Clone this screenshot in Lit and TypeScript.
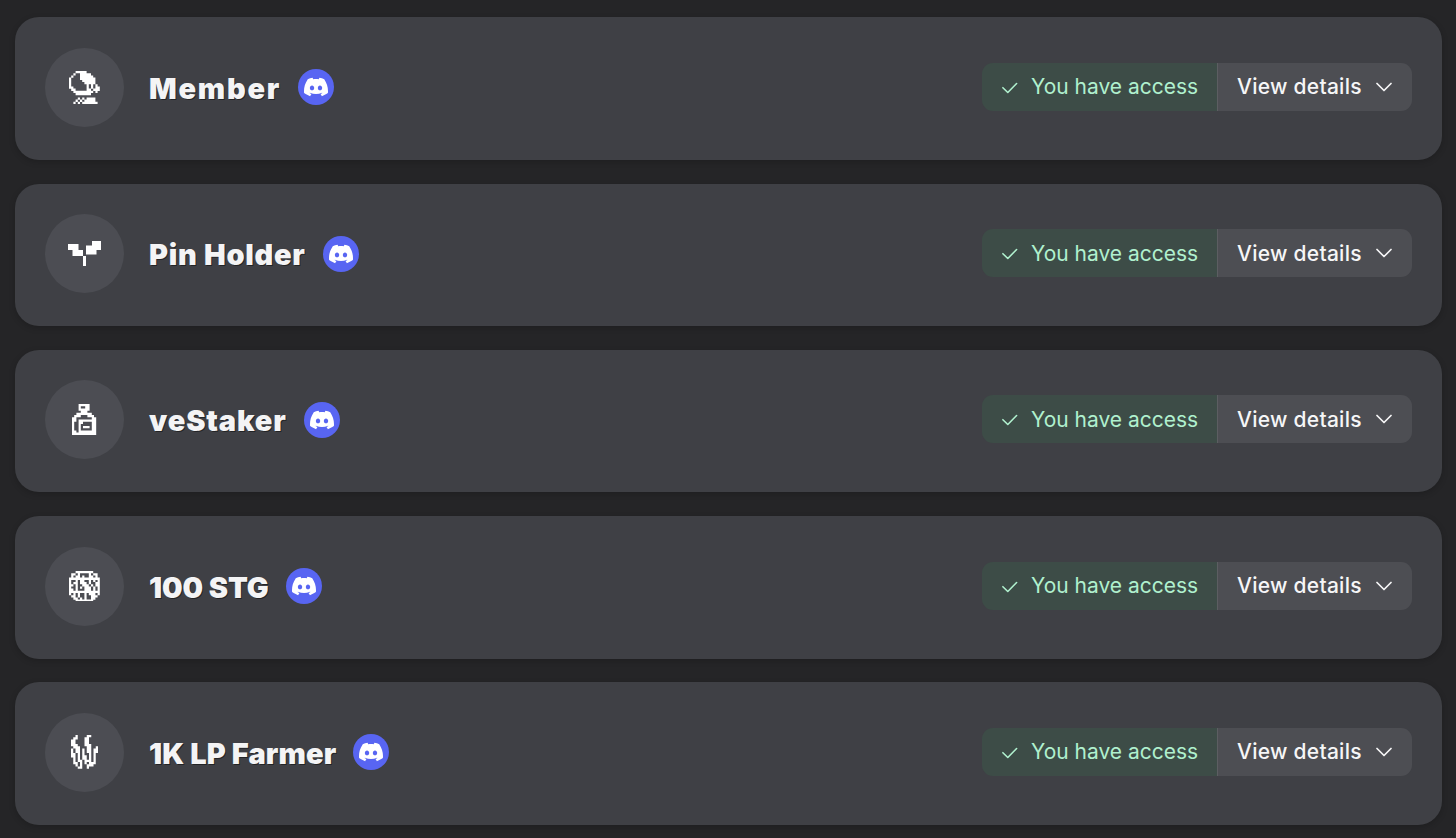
import { LitElement, html, css } from "lit";
import { customElement } from "lit/decorators.js";

const DISCORD = "M20.317 4.3698a19.7913 19.7913 0 00-4.8851-1.5152.0741.0741 0 00-.0785.0371c-.211.3753-.4447.8648-.6083 1.2495-1.8447-.2762-3.68-.2762-5.4868 0-.1636-.3933-.4058-.8742-.6177-1.2495a.077.077 0 00-.0785-.037 19.7363 19.7363 0 00-4.8852 1.515.0699.0699 0 00-.0321.0277C.5334 9.0458-.319 13.5799.0992 18.0578a.0824.0824 0 00.0312.0561c2.0528 1.5076 4.0413 2.4228 5.9929 3.0294a.0777.0777 0 00.0842-.0276c.4616-.6304.8731-1.2952 1.226-1.9942a.076.076 0 00-.0416-.1057c-.6528-.2476-1.2743-.5495-1.8722-.8923a.077.077 0 01-.0076-.1277c.1258-.0943.2517-.1923.3718-.2914a.0743.0743 0 01.0776-.0105c3.9278 1.7933 8.18 1.7933 12.0614 0a.0739.0739 0 01.0785.0095c.1202.099.246.1981.3728.2924a.077.077 0 01-.0066.1276 12.2986 12.2986 0 01-1.873.8914.0766.0766 0 00-.0407.1067c.3604.698.7719 1.3628 1.225 1.9932a.076.076 0 00.0842.0286c1.961-.6067 3.9495-1.5219 6.0023-3.0294a.077.077 0 00.0313-.0552c.5004-5.177-.8382-9.6739-3.5485-13.6604a.061.061 0 00-.0312-.0286zM8.02 15.3312c-1.1825 0-2.1569-1.0857-2.1569-2.419 0-1.3332.9555-2.4189 2.157-2.4189 1.2108 0 2.1757 1.0952 2.1568 2.419 0 1.3332-.9555 2.4189-2.1569 2.4189zm7.9748 0c-1.1825 0-2.1569-1.0857-2.1569-2.419 0-1.3332.9554-2.4189 2.1569-2.4189 1.2108 0 2.1757 1.0952 2.1568 2.419 0 1.3332-.946 2.4189-2.1568 2.4189Z";

const TREE = `
...#####......
..#..#####....
.#...######...
#....#######..
#.....######..
#......#####..
#.......#.#.#.
##......#.#.##
.##.....##.###
..#########.#.
...#######....
..............
....#.#.####..
...#.#.#####..
..#.#.#######.`;

const SPROUT = `
................######
................######
#######.........######
#######.....##########
#######.....##########
#######.....##########
...#######..#######...
...#######..#######...
...#######..#######...
...#######............
..........##..........
..........##..........
..........##..........
..........##..........
..........##..........
..........##..........
..........##..........`;

const BOTTLE = `
...#####...
...#..##...
...#####...
....###....
..#######..
.###...###.
##.......##
##.########
#..##....##
#..#.....##
#..#.###.##
#..#.....##
##.########
###########`;

const GLOBE = `
...########...
.##.#....#.##.
.#.##.#..##.#.
##############
#..#.##..#.#.#
#.##.###.#..##
##.#..###.#.##
#..#.#.###.#.#
##.#...###.#.#
##############
#.#.#..#.###.#
.##.#..#..###.
..##.#.#..##..
...########...`;

const FLAME = `
..#....##...
.##...##....
##....##....
##....##....
###...###...
.###...##..#
#.##.#.##.##
#.##.#.##.##
##.#.#..#.#.
##.#.##.#.#.
.#.#.##.#.#.
.#.##.###.#.
.##.#.#.###.
..#.#..###..
...##..#....`;

function pixelIcon(map: string, cell: number) {
  const rows = map.trim().split("\n");
  const w = Math.max(...rows.map((r) => r.length));
  const h = rows.length;
  let d = "";
  rows.forEach((row, y) => {
    for (const m of row.matchAll(/#+/g)) {
      d += `M${m.index} ${y}h${m[0].length}v1.04h-${m[0].length}z`;
    }
  });
  return html`<svg width=${w * cell} height=${h * cell} viewBox="0 0 ${w} ${h}" fill="#fff"><path d=${d}></path></svg>`;
}

const ROLES = [
  { name: "Member", icon: TREE, cell: 2.2, track: "1.75px" },
  { name: "Pin Holder", icon: SPROUT, cell: 1.5, track: "0.7px" },
  { name: "veStaker", icon: BOTTLE, cell: 2.2, track: "0.85px" },
  { name: "100 STG", icon: GLOBE, cell: 2.2, track: "-0.1px" },
  { name: "1K LP Farmer", icon: FLAME, cell: 2.25, track: "0.1px" },
];

@customElement("app-root")
export class AppRoot extends LitElement {
  static styles = css`
    :host {
      display: block;
      box-sizing: border-box;
      width: 1456px;
      height: 838px;
      padding: 17.25px 14px 0 15px;
      background: #252527;
      overflow: hidden;
      font-family: Inter, "Liberation Sans", sans-serif;
    }
    .list {
      display: flex;
      flex-direction: column;
      gap: 23.75px;
    }
    .card {
      box-sizing: border-box;
      height: 142.5px;
      padding: 30.5px 30px 0;
      display: flex;
      align-items: flex-start;
      justify-content: space-between;
      background: #3f4045;
      border-radius: 24px;
      box-shadow: 0 2px 6px rgba(0, 0, 0, 0.18);
    }
    .left {
      display: flex;
      align-items: center;
      height: 79px;
    }
    .avatar {
      width: 79px;
      height: 79px;
      border-radius: 50%;
      background: #4c4d53;
      display: flex;
      align-items: center;
      justify-content: center;
      margin-right: 25px;
    }
    .title {
      font-size: 29px;
      font-weight: 900;
      line-height: 36px;
      padding-top: 3px;
      color: #f4f4f5;
      text-shadow: 1px 1px 0 rgba(0, 0, 0, 0.45);
      margin-right: 17px;
      white-space: nowrap;
    }
    .discord {
      width: 36px;
      height: 36px;
      border-radius: 50%;
      background: #5865f2;
      display: flex;
      align-items: center;
      justify-content: center;
      flex: none;
    }
    .actions {
      display: flex;
      height: 48px;
      margin-top: 15px;
      font-size: 21px;
      border-radius: 11px;
      overflow: hidden;
    }
    .access {
      width: 235px;
      box-sizing: border-box;
      padding-left: 20px;
      display: flex;
      align-items: center;
      gap: 13px;
      background: #3d4c47;
      color: #b0f0ce;
    }
    .details {
      width: 195px;
      box-sizing: border-box;
      padding-left: 19px;
      display: flex;
      align-items: center;
      gap: 14px;
      background: #4d4e53;
      border-left: 1px solid #5c5e62;
      color: #f6f6f7;
      font-weight: 500;
      letter-spacing: 0.27px;
    }
    svg {
      display: block;
      flex: none;
    }
  `;

  render() {
    return html`<div class="list">
      ${ROLES.map(
        (r) => html`<div class="card">
          <div class="left">
            <div class="avatar">${pixelIcon(r.icon, r.cell)}</div>
            <div class="title" style="letter-spacing:${r.track}">${r.name}</div>
            <div class="discord">
              <svg width="24" height="24" viewBox="0 0 24 24" fill="#fff"><path d=${DISCORD}></path></svg>
            </div>
          </div>
          <div class="actions">
            <div class="access">
              <svg width="16" height="16" viewBox="0 0 16 16" fill="none" stroke="#b0f0ce" stroke-width="1.6" stroke-linecap="round" stroke-linejoin="round"><path d="M.9 8.7 5.8 13.5 14.6 4.5"></path></svg>
              <span>You have access</span>
            </div>
            <div class="details">
              <span>View details</span>
              <svg width="16" height="16" viewBox="0 0 16 16" fill="none" stroke="#f6f6f7" stroke-width="1.7" stroke-linecap="round" stroke-linejoin="round"><path d="M1 4.5 8 11.5 15 4.5"></path></svg>
            </div>
          </div>
        </div>`
      )}
    </div>`;
  }
}
